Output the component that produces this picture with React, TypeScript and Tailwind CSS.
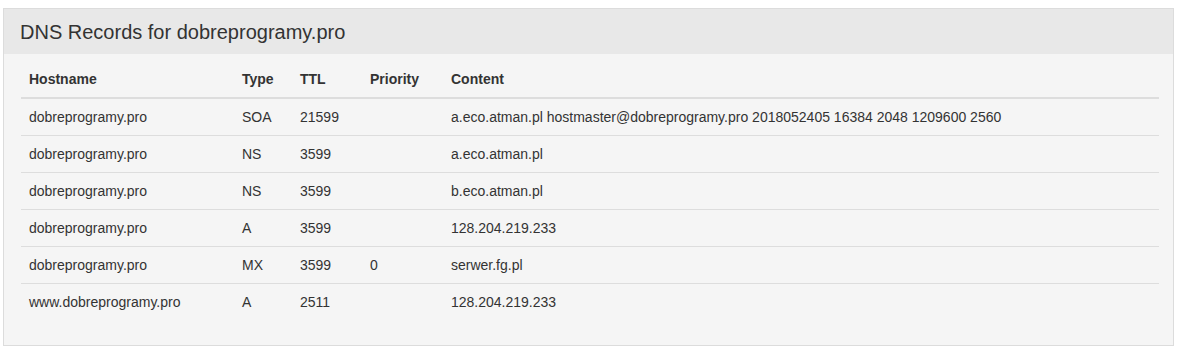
const records = [
  { host: "dobreprogramy.pro", type: "SOA", ttl: "21599", priority: "", content: "a.eco.atman.pl hostmaster@dobreprogramy.pro 2018052405 16384 2048 1209600 2560" },
  { host: "dobreprogramy.pro", type: "NS", ttl: "3599", priority: "", content: "a.eco.atman.pl" },
  { host: "dobreprogramy.pro", type: "NS", ttl: "3599", priority: "", content: "b.eco.atman.pl" },
  { host: "dobreprogramy.pro", type: "A", ttl: "3599", priority: "", content: "128.204.219.233" },
  { host: "dobreprogramy.pro", type: "MX", ttl: "3599", priority: "0", content: "serwer.fg.pl" },
  { host: "www.dobreprogramy.pro", type: "A", ttl: "2511", priority: "", content: "128.204.219.233" },
];

const App = () => {
  return (
    <div className="w-[1180px] h-[353px] bg-white pt-[8px] font-['Liberation_Sans',Arial,sans-serif] text-[#333]">
      <div className="ml-[3px] w-[1171px] border border-[#dcdcdc] bg-[#f5f5f5]">
        <div className="h-[45px] flex items-center px-[16px] bg-[#e8e8e8]">
          <h3 className="text-[20px] leading-none text-[#333]">DNS Records for dobreprogramy.pro</h3>
        </div>
        <div className="pl-[17px] pr-[14px] pt-[7px] pb-[25px]">
          <table className="w-full table-fixed border-collapse text-[14px] leading-[20px]">
            <colgroup>
              <col className="w-[213px]" />
              <col className="w-[58px]" />
              <col className="w-[70px]" />
              <col className="w-[81px]" />
              <col />
            </colgroup>
            <thead>
              <tr className="border-b-2 border-[#dddddd]">
                <th className="text-left font-bold p-[8px]">Hostname</th>
                <th className="text-left font-bold p-[8px]">Type</th>
                <th className="text-left font-bold p-[8px]">TTL</th>
                <th className="text-left font-bold p-[8px]">Priority</th>
                <th className="text-left font-bold p-[8px]">Content</th>
              </tr>
            </thead>
            <tbody>
              {records.map((r, i) => (
                <tr key={i} className={i > 0 ? "border-t border-[#dddddd]" : ""}>
                  <td className="p-[8px] whitespace-nowrap">{r.host}</td>
                  <td className="p-[8px]">{r.type}</td>
                  <td className="p-[8px]">{r.ttl}</td>
                  <td className="p-[8px]">{r.priority}</td>
                  <td className="p-[8px] whitespace-nowrap">{r.content}</td>
                </tr>
              ))}
            </tbody>
          </table>
        </div>
      </div>
    </div>
  );
};

export default App;
